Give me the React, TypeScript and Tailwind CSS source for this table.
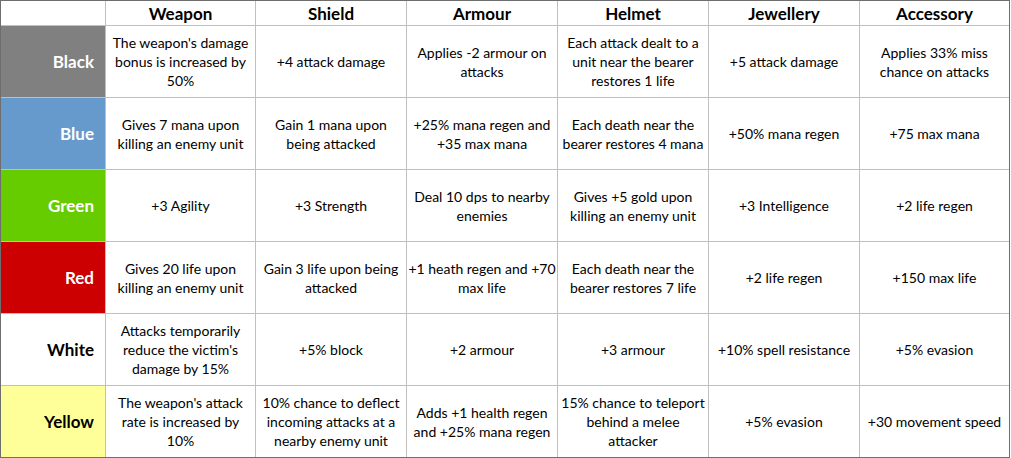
const columns = ['Weapon', 'Shield', 'Armour', 'Helmet', 'Jewellery', 'Accessory']

type Row = {
  name: string
  cls: string
  cells: string[][]
}

const rows: Row[] = [
  {
    name: 'Black',
    cls: 'bg-[#808080] text-white',
    cells: [
      ["The weapon's damage", 'bonus is increased by', '50%'],
      ['+4 attack damage'],
      ['Applies -2 armour on', 'attacks'],
      ['Each attack dealt to a', 'unit near the bearer', 'restores 1 life'],
      ['+5 attack damage'],
      ['Applies 33% miss', 'chance on attacks'],
    ],
  },
  {
    name: 'Blue',
    cls: 'bg-[#6699cc] text-white',
    cells: [
      ['Gives 7 mana upon', 'killing an enemy unit'],
      ['Gain 1 mana upon', 'being attacked'],
      ['+25% mana regen and', '+35 max mana'],
      ['Each death near the', 'bearer restores 4 mana'],
      ['+50% mana regen'],
      ['+75 max mana'],
    ],
  },
  {
    name: 'Green',
    cls: 'bg-[#66cc00] text-white',
    cells: [
      ['+3 Agility'],
      ['+3 Strength'],
      ['Deal 10 dps to nearby', 'enemies'],
      ['Gives +5 gold upon', 'killing an enemy unit'],
      ['+3 Intelligence'],
      ['+2 life regen'],
    ],
  },
  {
    name: 'Red',
    cls: 'bg-[#cc0000] text-white',
    cells: [
      ['Gives 20 life upon', 'killing an enemy unit'],
      ['Gain 3 life upon being', 'attacked'],
      ['+1 heath regen and +70', 'max life'],
      ['Each death near the', 'bearer restores 7 life'],
      ['+2 life regen'],
      ['+150 max life'],
    ],
  },
  {
    name: 'White',
    cls: 'bg-white text-black',
    cells: [
      ['Attacks temporarily', "reduce the victim's", 'damage by 15%'],
      ['+5% block'],
      ['+2 armour'],
      ['+3 armour'],
      ['+10% spell resistance'],
      ['+5% evasion'],
    ],
  },
  {
    name: 'Yellow',
    cls: 'bg-[#ffff99] text-black',
    cells: [
      ["The weapon's attack", 'rate is increased by', '10%'],
      ['10% chance to deflect', 'incoming attacks at a', 'nearby enemy unit'],
      ['Adds +1 health regen', 'and +25% mana regen'],
      ['15% chance to teleport', 'behind a melee', 'attacker'],
      ['+5% evasion'],
      ['+30 movement speed'],
    ],
  },
]

export default function App() {
  return (
    <div className="w-[1011px] h-[458px] bg-white font-['Lato','Open_Sans',sans-serif] text-black">
      <div className="grid w-[1010px] grid-cols-[104px_149px_150px_150px_150px_150px_149px] grid-rows-[24px_repeat(6,71px)] gap-px bg-[#c0c0c0] border border-[#6e6e6e]">
        {/* Header */}
        <div className="bg-white" />
        {columns.map(col => (
          <div key={col} className="bg-white flex items-center justify-center text-[17px] font-bold leading-none">
            {col}
          </div>
        ))}

        {/* Rows */}
        {rows.map(row => (
          <div key={row.name} className="contents">
            <div className={`${row.cls} flex items-center justify-end pr-[11px] text-[17px] font-bold`}>
              {row.name}
            </div>
            {row.cells.map((lines, i) => (
              <div
                key={i}
                className="bg-white flex flex-col items-center justify-center text-center text-[14px] leading-[19px] whitespace-nowrap"
              >
                {lines.map((line, j) => (
                  <span key={j}>{line}</span>
                ))}
              </div>
            ))}
          </div>
        ))}
      </div>
    </div>
  )
}
